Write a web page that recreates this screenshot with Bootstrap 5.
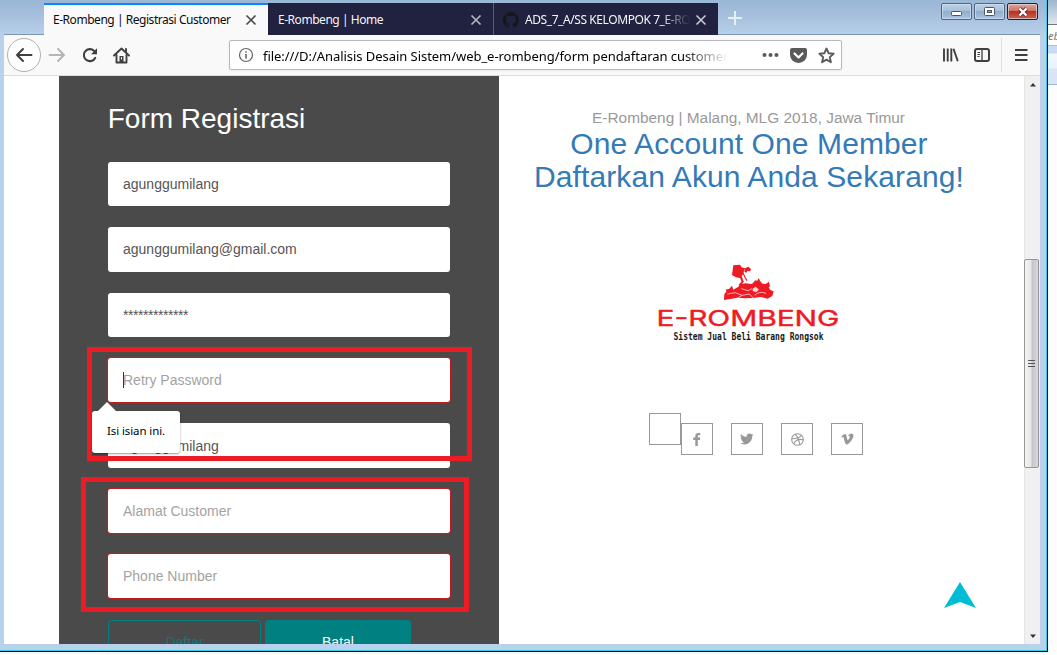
<!DOCTYPE html>
<html lang="id">
<head>
<meta charset="utf-8">
<title>E-Rombeng | Registrasi Customer</title>
<link href="https://cdn.jsdelivr.net/npm/bootstrap@5.3.0/dist/css/bootstrap.min.css" rel="stylesheet">
<style>
  body { width:1057px; height:655px; overflow:hidden; background:#fdfdfd; font-family:"Liberation Sans",Arial,sans-serif; font-size:14px; }
  svg { display:block; flex:none; }
  .win { width:1048px; height:652px; background:#b9d1ea; border-right:1px solid #000; border-bottom:1px solid #000; }
  .win-in { padding:0 6px 6px 4px; border-right:1px solid #2bd0ee; border-bottom:1px solid #2bd0ee; background:linear-gradient(#9bb7d6 0,#a3bddb 12px,#b9d1ea 36px,#b9d1ea 100%); }
  .ui { font-family:"Noto Sans","Open Sans",sans-serif; color:#000; }
  .titlebar { height:35px; padding:3px 0 0 40px; border-bottom:1px solid #7d94b0; }
  .tabx { height:32px; font-size:12px; background:#20223f; color:#f5f5fa; padding:2px 11px 0 10px; width:225px; border-left:1px solid #5b5e7d; white-space:nowrap; letter-spacing:-.46px; }
  .tabx.on { background:#f9f9fa; color:#0c0c0d; width:224px; border-left:0; border-top:2px solid #0a84ff; padding:0 11px 0 9px; }
  .tabx.first { border-left:0; }
  .tab-t { overflow:hidden; line-height:20px; }
  .fade-t { -webkit-mask-image:linear-gradient(90deg,#000 82%,transparent); mask-image:linear-gradient(90deg,#000 82%,transparent); }
  .wbtn { width:31px; height:17px; border:1px solid #4f6580; border-radius:2px; box-shadow:inset 0 0 0 1px #d5e3f2aa; background:linear-gradient(#bdd0e6,#a5bedb 50%,#8fadcf 50%,#aac4e0); }
  .wbtn.shut { border-color:#4b1119; background:linear-gradient(#e2a598,#cf6d5c 50%,#b8331f 50%,#d1604c); }
  .toolbar { height:41px; background:#f9f9fa; border-bottom:1px solid #dcdcdc; padding-left:3px; }
  .backb { width:34px; height:34px; border:1px solid #b1b1b3; border-radius:50%; background:#fdfdfd; }
  .urlbox { width:613px; height:30px; margin-left:99px; background:#fff; border:1px solid #b9b9bb; border-radius:2px; box-shadow:0 1px 3px #0001; padding:0 6px 0 8px; }
  .urlt { font-size:13px; width:465px; margin-left:9px; padding-top:3px; letter-spacing:-.05px; white-space:nowrap; overflow:hidden; -webkit-mask-image:linear-gradient(90deg,#000 90%,transparent); mask-image:linear-gradient(90deg,#000 90%,transparent); }
  .vsep { width:1px; height:34px; background:#dedee0; }
  .page { height:568px; background:#fff; overflow:hidden; }
  .formcol { width:440px; margin-left:55px; background:#4a4a4a; padding:26px 49px 0 49px; }
  .formcol h1 { font-size:28px; line-height:33px; color:#fff; margin:0 0 27px -.3px; font-weight:400; }
  .fld { height:44.4px; margin-bottom:20.93px; border:0; border-radius:3px; padding:0 15px; font-size:14px; color:#555; background:#fff; }
  .fld::placeholder { color:#a3a3a3; opacity:1; }
  .fld.up { padding-bottom:1px; }
  .fld.down { padding-top:1px; }
  .bad { box-shadow:0 0 1.5px 1px #d8151a; }
  .b1,.b2 { height:44px; border-radius:3px; font-size:14px; border:1px solid #008080; padding:1px 0 0; margin-top:.7px; }
  .b1 { width:153px; color:#0f7878; }
  .b2 { width:146px; color:#fff; background:#008080; }
  .side { width:499px; padding-top:33px; text-align:center; }
  .place { font-size:15.4px; line-height:18px; color:#999; }
  .side h2 { font-size:30px; letter-spacing:.1px; line-height:33px; color:#337ab7; margin:0 -1px 0 0; font-weight:400; }
  .soc { width:32px; height:32px; border:1px solid #999; margin-top:10px; margin-right:18px; color:#999; }
  .soc.blank { margin:0; }
  .sbar { width:16px; background:#f0f0f0; border-left:1px solid #e5e5e5; padding:6px 0 5px; }
  .thumb { width:15px; height:209px; margin-left:-1px; border:1px solid #959595; border-radius:2px; background:linear-gradient(90deg,#f4f4f4,#e6e6e6 45%,#c4c6ca 55%,#d9d9dc); }
  .mark-box { border:5px solid #ed1c24; }
  .m1 { left:87px; top:347px; width:385px; height:114px; }
  .m2 { left:81px; top:477px; width:388px; height:135px; }
  .hint { left:92px; top:411px; width:88px; height:42px; border-radius:3px; background:#fff; font-size:11.5px; letter-spacing:-.1px; padding-bottom:3px; box-shadow:0 1px 2px #0006; }
  .hint::before { content:""; position:absolute; left:6px; top:-9px; border:9px solid transparent; border-top:0; border-bottom-color:#fff; }
  .caret { left:123px; top:372px; width:1px; height:16px; background:#333; }
  .totop { left:944px; top:582px; }
  .behind { width:9px; }
</style>
<script src="https://cdn.jsdelivr.net/npm/bootstrap@5.3.0/dist/js/bootstrap.bundle.min.js"></script>
</head>
<body class="position-relative">
<div class="d-flex align-items-start">
<div class="win d-flex">
 <div class="win-in flex-grow-1 d-flex flex-column">
  <div class="titlebar d-flex ui">
    <div class="tabx on d-flex align-items-center"><span class="tab-t flex-grow-1">E-Rombeng | Registrasi Customer</span>
      <svg width="12" height="12" viewBox="0 0 12 12" stroke="#4a4a4a" stroke-width="1.6"><path d="M1.5 1.5l9 9m0-9l-9 9"/></svg></div>
    <div class="tabx first d-flex align-items-center"><span class="tab-t flex-grow-1">E-Rombeng | Home</span>
      <svg width="12" height="12" viewBox="0 0 12 12" stroke="#b9b9c4" stroke-width="1.6"><path d="M1.5 1.5l9 9m0-9l-9 9"/></svg></div>
    <div class="tabx d-flex align-items-center" style="padding-left:9px">
      <svg width="16" height="16" viewBox="0 0 16 16" fill="#15151a"><path d="M8 0a8 8 0 0 0-2.5 15.6c.4.1.5-.2.5-.4v-1.4c-2.2.5-2.7-1-2.7-1-.4-.9-.9-1.2-.9-1.2-.7-.5.1-.5.1-.5.8.1 1.2.8 1.2.8.7 1.2 1.9.9 2.3.7.1-.5.3-.9.5-1.1-1.8-.2-3.6-.9-3.6-4 0-.9.3-1.6.8-2.1-.1-.2-.4-1 .1-2.1 0 0 .7-.2 2.2.8a7.5 7.5 0 0 1 4 0c1.5-1 2.2-.8 2.2-.8.4 1.1.2 1.9.1 2.1.5.6.8 1.3.8 2.1 0 3.1-1.9 3.7-3.7 3.9.3.3.6.8.6 1.5v2.2c0 .2.1.5.5.4A8 8 0 0 0 8 0z"/></svg>
      <span class="tab-t fade-t flex-grow-1" style="margin:0 5px 0 6px;letter-spacing:-.42px">ADS_7_A/SS KELOMPOK 7_E-RO</span>
      <svg width="12" height="12" viewBox="0 0 12 12" stroke="#c9c9d4" stroke-width="1.6"><path d="M1.5 1.5l9 9m0-9l-9 9"/></svg></div>
    <svg class="ms-2 mt-2" width="18" height="16" viewBox="0 0 18 16" stroke="#e6eef6" stroke-width="2"><path d="M2 7h14M9 0v14"/></svg>
    <div class="d-flex ms-auto" style="gap:2px;padding-right:2px">
      <div class="wbtn d-flex align-items-center justify-content-center"><svg class="mt-1" width="12" height="5" viewBox="0 0 12 5"><rect x=".5" y=".5" width="10" height="4" rx="1" fill="#fff" stroke="#4b5563"/></svg></div>
      <div class="wbtn d-flex align-items-center justify-content-center"><svg width="11" height="9" viewBox="0 0 11 9"><rect x=".5" y=".5" width="10" height="8" rx="1" fill="#fff" stroke="#4b5563"/><rect x="3.5" y="3.5" width="4" height="2" fill="#8fadcf" stroke="#4b5563"/></svg></div>
      <div class="wbtn shut d-flex align-items-center justify-content-center"><svg width="12" height="10" viewBox="0 0 12 10"><path d="M2.5 1.5l7 7m0-7l-7 7" stroke="#5d3038" stroke-width="4"/><path d="M2.5 1.5l7 7m0-7l-7 7" stroke="#fff" stroke-width="2.3"/></svg></div>
    </div>
  </div>
  <div class="toolbar d-flex align-items-center ui">
    <div class="backb d-flex align-items-center justify-content-center"><svg width="18" height="16" viewBox="0 0 18 16" fill="none" stroke="#3f3f40" stroke-width="2" stroke-linecap="round" stroke-linejoin="round"><path d="M16.5 8H2M8 2L2 8l6 6"/></svg></div>
    <svg style="margin-left:7px" width="18" height="16" viewBox="0 0 18 16" fill="none" stroke="#b5b5b6" stroke-width="2" stroke-linecap="round" stroke-linejoin="round"><path d="M1.5 8H16M10 2l6 6-6 6"/></svg>
    <svg style="margin-left:15px" width="18" height="16" viewBox="0 0 18 16" fill="none" stroke="#3f3f40" stroke-width="2.1" stroke-linecap="round"><path d="M14.2 10.9A6 6 0 1 1 13 3.8"/><path d="M10 7.2h6V1.2z" fill="#3f3f40" stroke="none"/></svg>
    <svg style="margin-left:14px" width="17" height="17" viewBox="0 0 17 17" fill="none" stroke="#3f3f40" stroke-width="1.9" stroke-linejoin="round" stroke-linecap="round"><path d="M1 8.5L8.5 1.5 16 8.5M3.5 8v7.500h10V8"/><path d="M13 2v3"/><rect x="6.5" y="9" width="4" height="6" fill="#3f3f40" stroke="none"/><path d="M8.5 10.5v1.5" stroke="#fff" stroke-width="1"/></svg>
    <div class="urlbox d-flex align-items-center">
      <svg width="16" height="16" viewBox="0 0 16 16" fill="none" stroke="#646465"><circle cx="8" cy="8" r="6.5" stroke-width="1.2"/><path d="M8 7v4.500M8 4.200v1.600" stroke-width="1.6"/></svg>
      <span class="urlt">file:///D:/Analisis Desain Sistem/web_e-rombeng/form pendaftaran customer</span>
      <svg class="ms-auto" width="17" height="6" viewBox="0 0 17 6" fill="#5a5a5b"><circle cx="2.5" cy="3" r="2"/><circle cx="8.5" cy="3" r="2"/><circle cx="14.5" cy="3" r="2"/></svg>
      <svg style="margin-left:11px" width="17" height="15" viewBox="0 0 17 15"><path d="M2 0h13a2 2 0 0 1 2 2v4.500a8.500 8.500 0 0 1-17 0V2a2 2 0 0 1 2-2z" fill="#5a5a5b"/><path d="M4.500 5.500l4 4 4-4" fill="none" stroke="#fff" stroke-width="2.2" stroke-linecap="round" stroke-linejoin="round"/></svg>
      <svg style="margin-left:11px" width="17" height="17" viewBox="0 0 17 17" fill="none" stroke="#5a5a5b" stroke-width="1.9" stroke-linejoin="round"><path d="M8.500 1.500l2.100 4.700 5 .5-3.800 3.400 1.100 5.100-4.400-2.600-4.400 2.600 1.100-5.100L1.400 6.700l5-.5z"/></svg>
    </div>
    <svg style="margin-left:101px" width="16" height="14" viewBox="0 0 16 14" stroke="#3f3f40" stroke-width="1.9"><path d="M1 .5v13M4.700 .5v13M8.300 .5v13M10.500 .8l4.300 12.500"/></svg>
    <svg style="margin-left:15px" width="16" height="14" viewBox="0 0 16 14" fill="none" stroke="#3f3f40"><rect x="1" y="1" width="14" height="12" rx="2" stroke-width="2"/><path d="M8 1v12" stroke-width="1.3"/><path d="M3.500 4.500h2.500M3.500 6.500h2.500M3.500 8.500h2"/></svg>
    <div class="vsep" style="margin-left:11px"></div>
    <svg style="margin-left:13px" width="13" height="12" viewBox="0 0 13 12" stroke="#3f3f40" stroke-width="2"><path d="M0 1h12.500M0 6h12.500M0 11h12.500"/></svg>
  </div>
  <main class="page d-flex">
    <form class="formcol" novalidate>
      <h1>Form Registrasi</h1>
      <input class="fld d-block w-100" value="agunggumilang">
      <input class="fld up d-block w-100" value="agunggumilang@gmail.com">
      <input class="fld d-block w-100" value="*************" style="letter-spacing:-.45px">
      <input class="fld d-block w-100 bad" placeholder="Retry Password">
      <input class="fld down d-block w-100" value="agunggumilang">
      <input class="fld d-block w-100 bad" placeholder="Alamat Customer">
      <input class="fld d-block w-100 bad" placeholder="Phone Number">
      <div class="d-flex gap-1"><button type="button" class="btn b1">Daftar</button><button type="button" class="btn b2">Batal</button></div>
    </form>
    <section class="side">
      <div class="place">E-Rombeng | Malang, MLG 2018, Jawa Timur</div>
      <h2>One Account One Member<br>Daftarkan Akun Anda Sekarang!</h2>
      <svg style="margin:67px 0 0 154px" width="190" height="85" viewBox="0 0 190 85">
        <g transform="translate(-13 -10) scale(.3333)">
          <g fill="#ed1c24">
            <path d="M280 46l20-2 5 8 10 3-6 17-7 13-14-3-12-7z"/>
            <path d="M315 55l10-5 8 7-2 7-9-1-3 5-6-3z"/>
            <path d="M252 150l1-17 7-10-4-4 12-3 8-9 4 12 14-8 10-9 12-2 20 2 10-11 6 1 4-8 4 8 7 9 10 1 10-7 3 14-4 3 5 8 10 4-4 14-14 8-20-5-25 3-24 1-24-2-14 3z"/>
          </g>
          <path d="M302 80l6 15-10 12" fill="none" stroke="#ed1c24" stroke-width="6"/><path d="M309 68l6 14 6 10" fill="none" stroke="#ed1c24" stroke-width="3.500"/>
          <path d="M262 132l24-4 20 8-18 12M306 136l22-4 14 14M304 116l20 6 12-6M344 136q14-14 34-6" fill="none" stroke="#fff" stroke-width="2"/>
          <path d="M337 117l10-7 10 9-8 7-10-2z" fill="#fbd5d6"/>
        </g>
        <text transform="translate(3.5 65.7) scale(1.36 1)" x="0" y="0" font-family="Inter" font-size="22" font-weight="400" fill="#ed1c24" stroke="#ed1c24" stroke-width=".4" stroke-linejoin="round" textLength="134.5" lengthAdjust="spacing">E-ROMBENG</text>
        <text x="20.5" y="79.5" font-family="DejaVu Sans Mono" font-size="10.5" font-weight="700" fill="#191919" textLength="150" lengthAdjust="spacingAndGlyphs">Sistem Jual Beli Barang Rongsok</text>
      </svg>
      <div class="d-flex" style="margin:68px 0 0 150px">
        <div class="soc blank"></div>
        <div class="soc d-flex align-items-center justify-content-center"><svg width="8" height="13" viewBox="0 0 8 13" fill="#999"><path d="M7.200 0v2.200H5.800c-.8 0-1 .4-1 1V4.500h2.400L6.900 7H4.800v6H2.300V7H.2V4.500h2.100V2.800C2.300.900 3.500 0 5.300 0z"/></svg></div>
        <div class="soc d-flex align-items-center justify-content-center"><svg width="14" height="12" viewBox="0 0 14 12" fill="#999"><path d="M13.500 1.700c-.4.600-.8 1-1.300 1.400C12.400 8 8.800 11.500 4.500 11.500 2.900 11.500 1.400 11 .2 10.300c1.500.1 2.900-.3 4-1.200-1.200 0-2.200-.8-2.600-1.900h1.200C1.500 6.900.6 5.800.6 4.400c.4.2.8.3 1.200.3C.6 3.800.2 2.200 1 .9c1.400 1.700 3.400 2.800 5.700 2.900C6.300 2 7.600.4 9.400.4c.8 0 1.500.3 2 .9.6-.1 1.200-.4 1.700-.7-.2.6-.6 1.100-1.200 1.500.6-.1 1.100-.2 1.600-.4z"/></svg></div>
        <div class="soc d-flex align-items-center justify-content-center"><svg width="13" height="13" viewBox="0 0 13 13" fill="none" stroke="#999" stroke-width="1.1"><circle cx="6.5" cy="6.5" r="5.8"/><path d="M.7 5.700c4 .1 7.500-.8 9.800-3.400M4.300 1.200c2.200 2.500 3.800 6 4.400 10.600M2.600 10.700c1.800-3.600 5.100-5.100 9.700-4"/></svg></div>
        <div class="soc d-flex align-items-center justify-content-center"><svg width="13" height="12" viewBox="0 0 13 12" fill="#999"><path d="M12.500 3.100c-.1 1.200-.9 2.900-2.500 4.900C8.300 10.300 6.900 11.500 5.700 11.500c-.7 0-1.300-.7-1.800-2L2.900 5.800c-.3-1.300-.7-1.900-1.100-1.900-.1 0-.4.2-.9.5L.3 3.600l1.700-1.500C2.800 1.400 3.400 1 3.800 1c.9-.1 1.500.5 1.700 1.900.4 2.700.8 4.100 1.300 4.100.4 0 .9-.6 1.600-1.700.7-1.200.5-2.200-.5-2.200-.2 0-.5.1-.8.2C7.700 1.300 8.900.4 10.500.4c1.300 0 2 1 2 2.700z"/></svg></div>
      </div>
    </section>
    <div class="sbar d-flex flex-column justify-content-between ms-auto">
      <svg class="ms-1" width="8" height="5" viewBox="0 0 8 5"><path d="M1 4.500l3-3.500 3 3.500z" fill="#333"/></svg>
      <div class="thumb d-flex align-items-center justify-content-center" style="margin-top:6px"><svg width="8" height="9" viewBox="0 0 8 9" stroke="#555"><path d="M0 1.500h7M0 4.500h7M0 7.500h7"/></svg></div>
      <svg class="ms-1" width="8" height="5" viewBox="0 0 8 5"><path d="M1 .5l3 3.500 3-3.500z" fill="#333"/></svg>
    </div>
  </main>
 </div>
</div>
<div class="behind ui overflow-hidden">
  <div style="height:24px;background:linear-gradient(#9fb6cb,#dfe8f0)"></div>
  <div style="height:22px;font-size:11px;line-height:22px;color:#777;border-top:1px solid #777;border-bottom:1px solid #bbb"><i>eb</i></div>
  <div style="height:39px;background:linear-gradient(#c9dbf0 0 7px,#f3f8ff 8px,#eaf1fb 22px,#d9e5f5 23px);border-bottom:1px solid #9fb6d8"></div>
</div>
</div>
<div class="position-absolute mark-box m1"></div>
<div class="position-absolute mark-box m2"></div>
<div class="position-absolute caret"></div>
<div class="position-absolute hint ui d-flex align-items-center justify-content-center">Isi isian ini.</div>
<svg class="position-absolute totop" width="32" height="27" viewBox="0 0 32 27"><path d="M16 0l16 26-16-6-16 6z" fill="#00bcd4"/></svg>
</body>
</html>
